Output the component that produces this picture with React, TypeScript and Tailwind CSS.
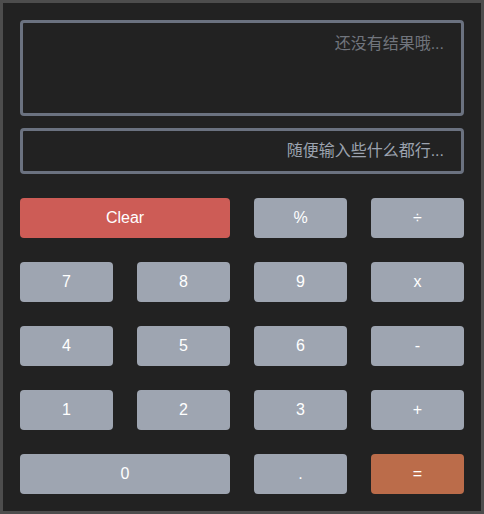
const font = { fontFamily: '"Liberation Sans", "Noto Sans CJK SC", sans-serif' }

type Key = { label: string; span?: boolean; tone?: 'grey' | 'red' | 'orange' }

const keys: Key[] = [
	{ label: 'Clear', span: true, tone: 'red' },
	{ label: '%' },
	{ label: '÷' },
	{ label: '7' },
	{ label: '8' },
	{ label: '9' },
	{ label: 'x' },
	{ label: '4' },
	{ label: '5' },
	{ label: '6' },
	{ label: '-' },
	{ label: '1' },
	{ label: '2' },
	{ label: '3' },
	{ label: '+' },
	{ label: '0', span: true },
	{ label: '.' },
	{ label: '=', tone: 'orange' },
]

function KeyButton({ label, span, tone = 'grey' }: Key) {
	const bg =
		tone === 'red' ? 'bg-[#cd5c56]' : tone === 'orange' ? 'bg-[#bb6c4a]' : 'bg-[#9ea5b1]'
	return (
		<button
			className={`h-10 rounded text-base text-white ${bg} ${span ? 'col-span-2' : ''}`}
			style={font}
		>
			{label}
		</button>
	)
}

export default function App() {
	return (
		<div
			className="flex h-[514px] w-[484px] flex-col border-[3px] border-[#4d4d4d] bg-[#222222] p-[17px]"
			style={font}
		>
			<div className="mb-3 h-[96px] rounded border-[3px] border-[#6b7280] pt-[9px] pr-[17px] text-right text-base leading-6 text-[#71757d]">
				还没有结果哦...
			</div>
			<div className="mb-6 flex h-[46px] items-center justify-end rounded border-[3px] border-[#6b7280] pr-[17px] text-base text-[#9ca3af]">
				随便输入些什么都行...
			</div>
			<div className="grid grid-cols-4 gap-6">
				{keys.map((k) => (
					<KeyButton key={k.label} {...k} />
				))}
			</div>
		</div>
	)
}
